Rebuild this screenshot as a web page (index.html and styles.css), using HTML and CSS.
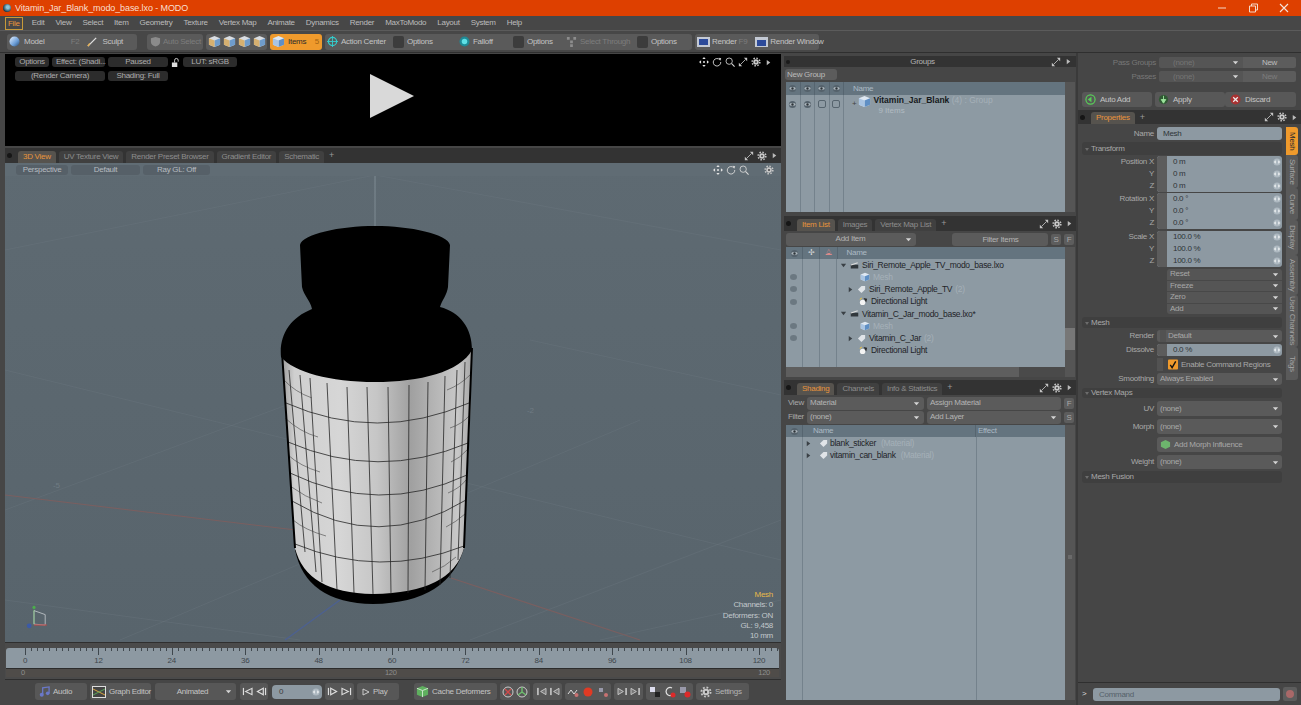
FILE: index.html
```html
<!DOCTYPE html>
<html lang="en">
<head>
<meta charset="utf-8">
<title>Vitamin_Jar_Blank_modo_base.lxo - MODO</title>
<link rel="stylesheet" href="styles.css">
</head>
<body>
<svg class="defs" width="0" height="0" aria-hidden="true">
  <defs>
    <linearGradient id="sphere" x1="0" y1="0" x2="1" y2="1"><stop offset="0" stop-color="#e8f2ff"/><stop offset=".6" stop-color="#6d9fd8"/><stop offset="1" stop-color="#24476f"/></linearGradient>
    <linearGradient id="bodygrad" x1="283" y1="0" x2="471" y2="0" gradientUnits="userSpaceOnUse">
      <stop offset="0" stop-color="#a0a0a0"/><stop offset=".06" stop-color="#cfcfcf"/><stop offset=".3" stop-color="#d6d6d6"/><stop offset=".5" stop-color="#c6c6c6"/><stop offset=".68" stop-color="#a0a0a0"/><stop offset=".8" stop-color="#b4b4b4"/><stop offset=".93" stop-color="#c8c8c8"/><stop offset="1" stop-color="#a8a8a8"/>
    </linearGradient>
    <symbol id="cube" viewBox="0 0 14 14"><path d="M7 1l6 2.500v7L7 13l-6-2.500v-7z" fill="#d9dde2"/><path d="M7 6l6-2.500v7L7 13z" fill="#6f9ccb"/><path d="M1 3.500L7 6v7l-6-2.500z" fill="#d6b070"/></symbol>
    <symbol id="cubeb" viewBox="0 0 14 14"><path d="M7 1l6 2.500v7L7 13l-6-2.500v-7z" fill="#dfe8f2"/><path d="M7 6l6-2.500v7L7 13z" fill="#5f8fc4"/><path d="M1 3.500L7 6v7l-6-2.500z" fill="#a9c4e2"/></symbol>
    <symbol id="eye" viewBox="0 0 10 10"><circle cx="5" cy="5" r="4" fill="#55626c"/><ellipse cx="5" cy="5" rx="3.500" ry="1.600" fill="#aab4bb"/><circle cx="5" cy="5" r="1.300" fill="#2c3338"/></symbol>
    <symbol id="move" viewBox="0 0 12 12"><path d="M6 0l2 2.500H4zM6 12l2-2.500H4zM0 6l2.500-2v4zM12 6L9.500 4v4z" fill="#e4e4e4"/><circle cx="6" cy="6" r="1.200" fill="#e4e4e4"/></symbol>
    <symbol id="rot" viewBox="0 0 12 12"><path d="M9.500 3.500A4.500 4.500 0 1 0 10.500 6" fill="none" stroke="#d8d8d8" stroke-width="1.100"/><path d="M8 1l3 .5-1 3z" fill="#d8d8d8"/></symbol>
    <symbol id="zoom" viewBox="0 0 12 12"><circle cx="5" cy="5" r="3.800" fill="none" stroke="#d8d8d8" stroke-width="1"/><path d="M8 8l3.500 3.500" stroke="#d8d8d8" stroke-width="1.300"/></symbol>
    <symbol id="expand" viewBox="0 0 12 12"><path d="M7 1h4v4zM1 11V7l4 4z" fill="#c4c4c4"/><path d="M3 9l6-6" stroke="#c4c4c4"/></symbol>
    <symbol id="gear" viewBox="0 0 12 12"><circle cx="6" cy="6" r="3.300" fill="#c8c8c8"/><circle cx="6" cy="6" r="4.600" fill="none" stroke="#c8c8c8" stroke-width="1.800" stroke-dasharray="1.800 1.800"/><circle cx="6" cy="6" r="1.200" fill="#444"/></symbol>
    <symbol id="caret" viewBox="0 0 8 8"><path d="M1 2.500h6L4 6z" fill="#d4d4d4"/></symbol>
    <symbol id="arrow" viewBox="0 0 8 8"><path d="M2 1v6l4-3z" fill="currentColor"/></symbol>
    <symbol id="light" viewBox="0 0 10 10"><circle cx="4" cy="6" r="3" fill="#f3f3f3"/><path d="M5 1l4 1-1 4z" fill="#2a2a2a"/><path d="M1 3l2-2" stroke="#e4c04a" stroke-width="1.200"/></symbol>
    <symbol id="scene" viewBox="0 0 12 10"><path d="M1 4h10v5H1z" fill="#30373c"/><path d="M1 3.500l9-3 .6 1.500-9 3z" fill="#dcdcdc"/></symbol>
    <symbol id="tag" viewBox="0 0 10 10"><path d="M1 5l4-4h4v4l-4 4z" fill="#e0e4e8"/></symbol>
    <symbol id="lr" viewBox="0 0 8 8"><circle cx="4" cy="4" r="3.600" fill="#aeb9c1"/><path d="M.8 4l2-1.800v3.600zM7.200 4l-2-1.800v3.600z" fill="#eef1f3"/></symbol>
    <symbol id="skl" viewBox="0 0 12 10"><path d="M1.500 1v8" stroke="#ddd" stroke-width="1.300"/><path d="M11 1.500v7L4 5z" fill="none" stroke="#ddd" stroke-width="1.300"/></symbol>
    <symbol id="stl" viewBox="0 0 12 10"><path d="M10.500 1v8" stroke="#ddd" stroke-width="1.300"/><path d="M8 1.500v7L1.500 5z" fill="none" stroke="#ddd" stroke-width="1.300"/></symbol>
    <symbol id="str" viewBox="0 0 12 10"><path d="M1.500 1v8" stroke="#ddd" stroke-width="1.300"/><path d="M4 1.500v7L10.500 5z" fill="none" stroke="#ddd" stroke-width="1.300"/></symbol>
    <symbol id="skr" viewBox="0 0 12 10"><path d="M10.500 1v8" stroke="#ddd" stroke-width="1.300"/><path d="M1 1.500v7L8 5z" fill="none" stroke="#ddd" stroke-width="1.300"/></symbol>
    <symbol id="kl" viewBox="0 0 12 10"><path d="M1 1h2v8H1z" fill="#bbb"/><path d="M11 1.500v7L5 5z" fill="#777" stroke="#ccc"/></symbol>
    <symbol id="kr" viewBox="0 0 12 10"><path d="M9 1h2v8H9z" fill="#bbb"/><path d="M1 1.500v7L7 5z" fill="#777" stroke="#ccc"/></symbol>
  </defs>
</svg>
<div class="app">
  <header class="titlebar">
    <span class="applogo"></span>
    <span class="titletext">Vitamin_Jar_Blank_modo_base.lxo - MODO</span>
    <span class="winctl">
      <svg class="wi" viewBox="0 0 10 10"><path d="M1 5h8" stroke="#f4d8c8"/></svg>
      <svg class="wi" viewBox="0 0 10 10"><path d="M1.500 3h6v6h-6zM3.500 3V1h6v6H7.500" fill="none" stroke="#f4d8c8"/></svg>
      <svg class="wi" viewBox="0 0 10 10"><path d="M1 1l8 8M9 1l-8 8" stroke="#f4e4dc" stroke-width="1.100"/></svg>
    </span>
  </header>
  <nav class="menubar">
    <span class="mi mi-on">File</span><span class="mi">Edit</span><span class="mi">View</span><span class="mi">Select</span><span class="mi">Item</span><span class="mi">Geometry</span><span class="mi">Texture</span><span class="mi">Vertex Map</span><span class="mi">Animate</span><span class="mi">Dynamics</span><span class="mi">Render</span><span class="mi">MaxToModo</span><span class="mi">Layout</span><span class="mi">System</span><span class="mi">Help</span>
  </nav>
  <div class="toolbar">
    <div class="tgroup w130">
      <svg class="ti" viewBox="0 0 12 12"><circle cx="6" cy="6" r="5.500" fill="url(#sphere)"/></svg>
      <span class="tl model">Model</span><span class="tk">F2</span>
      <svg class="ti" viewBox="0 0 12 12"><path d="M1 11L10 2" stroke="#e0e0e0" stroke-width="1.400"/><path d="M1 11l2-3" stroke="#e8b050" stroke-width="1.500"/></svg>
      <span class="tl sculpt">Sculpt</span>
    </div>
    <div class="tgroup w56 gap10">
      <svg class="ti" viewBox="0 0 12 12"><path d="M6 1l5 1.500v4Q11 10 6 11.500 1 10 1 6.500v-4z" fill="#8b8b8b"/></svg>
      <span class="tl off">Auto Select</span>
    </div>
    <div class="tgroup w61 gapc">
      <svg class="ci" viewBox="0 0 14 14"><use href="#cube"/></svg><svg class="ci" viewBox="0 0 14 14"><use href="#cube"/></svg><svg class="ci" viewBox="0 0 14 14"><use href="#cube"/></svg><svg class="ci" viewBox="0 0 14 14"><use href="#cube"/></svg>
    </div>
    <div class="tgroup w52 orange gap4">
      <svg class="ci" viewBox="0 0 14 14"><use href="#cubeb"/></svg>
      <span class="tl dark">Items</span><span class="tk5">5</span>
    </div>
    <div class="tgroup w367 gap4">
      <svg class="ti" viewBox="0 0 12 12"><circle cx="6" cy="6" r="4.500" fill="none" stroke="#3cc" stroke-width="1.300"/><path d="M6 0v12M0 6h12" stroke="#3cc"/></svg>
      <span class="tl f49">Action Center</span>
      <span class="sq"></span><span class="tl f49">Options</span>
      <svg class="ti" viewBox="0 0 12 12"><circle cx="6" cy="6" r="5.500" fill="#1f8a96"/><circle cx="6" cy="6" r="3" fill="#5fe0e6"/></svg>
      <span class="tl f37">Falloff</span>
      <span class="sq"></span><span class="tl f36">Options</span>
      <svg class="ti" viewBox="0 0 12 12"><path d="M1 1h3v3H1zM8 1h3v3H8zM4.500 5h3v3h-3zM4.500 9h3v3h-3z" fill="#8d8d8d"/></svg>
      <span class="tl off f54">Select Through</span>
      <span class="sq"></span><span class="tl">Options</span>
    </div>
    <div class="tgroup w124 gapr">
      <svg class="ri" viewBox="0 0 13 10"><rect width="13" height="10" fill="#c3c9d4"/><rect x="2" y="2" width="9" height="6" fill="#2c4a9a"/></svg>
      <span class="tl">Render</span><span class="tk">F9</span>
      <svg class="ri" viewBox="0 0 13 10"><rect width="13" height="10" fill="#c3c9d4"/><rect x="2" y="3" width="9" height="6" fill="#2c4a9a"/></svg>
      <span class="tl">Render Window</span>
    </div>
  </div>

  <div class="main">
    <section class="left">
      <div class="preview">
        <div class="ovrow">
          <span class="pb w34">Options</span><span class="pb w53">Effect: (Shadi...</span><span class="pb w60">Paused</span>
          <svg class="lock" viewBox="0 0 10 10"><path d="M1 5h6v5H1z" fill="#ddd"/><path d="M4 5V2.500a2 2 0 0 1 4 0V4" fill="none" stroke="#ddd"/></svg>
          <span class="pb w54">LUT: sRGB</span>
          <span class="ovicons">
            <svg class="oi"><use href="#move"/></svg><svg class="oi"><use href="#rot"/></svg><svg class="oi"><use href="#zoom"/></svg><svg class="oi"><use href="#expand"/></svg><svg class="oi"><use href="#gear"/></svg><svg class="oa"><use href="#arrow"/></svg>
          </span>
        </div>
        <div class="ovrow r2">
          <span class="pb w90">(Render Camera)</span><span class="pb w60">Shading: Full</span>
        </div>
        <svg class="play" viewBox="0 0 44 44"><path d="M0 0l44 22L0 44z" fill="#d9d9d9"/></svg>
      </div>

      <div class="tabs vt">
        <span class="dot"></span>
        <span class="tab on">3D View</span><span class="tab">UV Texture View</span><span class="tab">Render Preset Browser</span><span class="tab">Gradient Editor</span><span class="tab">Schematic</span><span class="plus">+</span>
        <span class="tabicons"><svg class="oi"><use href="#expand"/></svg><svg class="oi"><use href="#gear"/></svg><svg class="oa"><use href="#arrow"/></svg></span>
      </div>

      <div class="viewport">
        <svg class="scene" viewBox="5 163 776 479" preserveAspectRatio="none">
          <g stroke="#6c7880" stroke-width="1" fill="none" opacity=".35">
            <path d="M5 510L300 400M120 640L640 420M470 640L781 520M5 250L375 175M375 175L781 250M5 370L781 560M5 600L300 640M530 340L781 395M600 640L781 600"/>
          </g>
          <path d="M375 163V232" stroke="#7f8b93"/>
          <path d="M5 495L296 530M451 578L640 640" stroke="#7a5f60" stroke-width="1.100" fill="none"/>
          <path d="M340 600L285 640" stroke="#4d6190" stroke-width="1.400"/>
          <path d="M295 550Q306 603 373 604Q450 603 465 545Z" fill="#000"/>
          <path d="M282 352Q374 410 472 348L470 420L464 548Q452 593 373 594Q306 593 295 548L288 440Z" fill="url(#bodygrad)"/>
          <g fill="none" stroke="#262626" stroke-width=".8">
            <path d="M286 403Q377 443 469 403"/>
            <path d="M288 442Q378 481 468 443"/>
            <path d="M290 473Q379 516 467 475"/>
            <path d="M292 501Q379 553 466 500"/>
            <path d="M295 544Q380 579 464 546"/>
            <path d="M289 370L305 552M300 375L316 572M310 378L322 582M327 383L337 590M347 387L354 593M367 387L373 594M388 387L391 594M409 385L408 593M428 382L425 590M445 376L440 585M457 370L450 578M465 362L458 560"/>
          </g>
          <g fill="none" stroke="#444" stroke-width=".6">
            <path d="M284 380Q295 392 312 398M285 418Q300 432 318 437M288 455Q300 466 320 472M290 486Q305 497 322 503M293 520Q305 530 326 536M447 390Q460 385 470 375M450 428Q462 424 469 416M451 462Q460 458 467 450M448 493Q460 488 466 480M446 527Q456 522 465 514M432 572Q445 567 456 557"/>
          </g>
          <path d="M282 352L295 548M472 348L464 548" stroke="#000" stroke-width="2" fill="none"/>
          <path d="M300 245C302 234 340 226 375 226C410 226 448 234 450 245L448 287C447 295 442 300 440 307C460 312 472 328 472 350C460 372 420 382 375 382C330 382 294 372 281 357C279 335 290 318 312 309C310 300 304 296 302 287Z" fill="#000"/>
        </svg>
        <div class="vbar">
          <span class="vb w52v">Perspective</span><span class="vb w69v">Default</span><span class="vb w68v">Ray GL: Off</span>
          <span class="ovicons v"><svg class="oi"><use href="#move"/></svg><svg class="oi"><use href="#rot"/></svg><svg class="oi"><use href="#zoom"/></svg><svg class="oi gearv"><use href="#gear"/></svg></span>
        </div>
        <span class="coord c1">-2</span>
        <span class="coord c2">-5</span>
        <svg class="axis" viewBox="0 0 30 34">
          <path d="M10 8v18" stroke="#5aa55a" stroke-width="1.500"/><circle cx="10" cy="5" r="2" fill="#4cae4c"/>
          <path d="M10 9l14 5v13L10 26z" fill="none" stroke="#c6cbcf"/>
          <path d="M10 27h16" stroke="#b54a4a" stroke-width="1.500"/>
          <circle cx="4" cy="28" r="3" fill="#3b5aa8"/>
        </svg>
        <div class="stats">
          <span class="sm">Mesh</span><span>Channels: 0</span><span>Deformers: ON</span><span>GL: 9,458</span><span>10 mm</span>
        </div>
      </div>

      <div class="timeline">
        <div class="ruler">
          <span class="tn">0</span><span class="tn">12</span><span class="tn">24</span><span class="tn">36</span><span class="tn">48</span><span class="tn">60</span><span class="tn">72</span><span class="tn">84</span><span class="tn">96</span><span class="tn">108</span><span class="tn">120</span>
        </div>
        <div class="range"><span>0</span><span class="mid">120</span><span>120</span></div>
      </div>

      <div class="transport">
        <span class="tb w52"><svg class="ti" viewBox="0 0 12 12"><path d="M4 9V2l7-1v7" fill="none" stroke="#6a78c8" stroke-width="1.400"/><circle cx="3" cy="9.500" r="2.200" fill="#6a78c8"/><circle cx="9.500" cy="8" r="2" fill="#6a78c8"/></svg>Audio</span>
        <span class="tb w61"><svg class="ge" viewBox="0 0 14 12"><rect x=".5" y=".5" width="13" height="11" fill="#444" stroke="#ddd"/><path d="M1 3l12 6" stroke="#d9a640"/><path d="M1 9l12-6" stroke="#5aa55a"/></svg>Graph Editor</span>
        <span class="tb w81 ctr">Animated<svg class="cr"><use href="#caret"/></svg></span>
        <span class="tb w28 ctr"><svg class="sk"><use href="#skl"/></svg><svg class="sk"><use href="#stl"/></svg></span>
        <span class="frame">0<svg class="lr"><use href="#lr"/></svg></span>
        <span class="tb w29 ctr"><svg class="sk"><use href="#str"/></svg><svg class="sk"><use href="#skr"/></svg></span>
        <span class="tb w42"><svg class="pl" viewBox="0 0 8 8"><path d="M1 1v6l6-3z" fill="none" stroke="#ccc"/></svg>Play</span>
        <span class="tb w83 ml14"><svg class="ci" viewBox="0 0 14 14"><path d="M7 1l6 2.500v7L7 13l-6-2.500v-7z" fill="#5fb05f"/><path d="M7 6l6-2.500M7 6L1 3.500M7 6v7" stroke="#cfe8cf"/></svg>Cache Deformers</span>
        <span class="tb w30t ctr g2"><svg class="tr"><circle cx="6" cy="6" r="5" fill="none" stroke="#ccc"/><path d="M3 3l6 6M9 3l-6 6" stroke="#d04a4a" stroke-width="1.400"/></svg><svg class="tr"><circle cx="6" cy="6" r="5" fill="none" stroke="#ccc"/><path d="M6 6V1M6 6l4 3M6 6l-4 3" stroke="#6fc06f" stroke-width="1.400"/></svg></span>
        <span class="tb w29 ctr g2"><svg class="sk"><use href="#kl"/></svg><svg class="sk"><use href="#kl"/></svg></span>
        <span class="tb w46 ctr g4"><svg class="tr"><path d="M1 8l3-4 3 4 3-4" fill="none" stroke="#ddd"/><circle cx="9.500" cy="9" r="2" fill="#c87272"/></svg><svg class="tr"><circle cx="6" cy="6" r="4.500" fill="#e03a24"/></svg><svg class="tr"><path d="M2 2h4v4H2z" fill="#99a"/><circle cx="9" cy="9" r="2" fill="#c87272"/></svg></span>
        <span class="tb w29 ctr g2"><svg class="sk"><use href="#kr"/></svg><svg class="sk"><use href="#kr"/></svg></span>
        <span class="tb w47 ctr g3"><svg class="tr"><path d="M1 1h5v5H1z" fill="#dde"/><path d="M6 6h5v5H6z" fill="#222"/></svg><svg class="tr"><path d="M8 2a4 4 0 1 0 0 7" fill="none" stroke="#ddd" stroke-width="1.300"/><circle cx="9" cy="9" r="2.500" fill="#dd2a2a"/></svg><svg class="tr"><path d="M1 1h6v6H1z" fill="#99a"/><circle cx="8.500" cy="8.500" r="3" fill="#dd2a2a"/></svg></span>
        <span class="tb w53 last"><svg class="tr"><use href="#gear"/></svg>Settings</span>
      </div>
    </section>

    <section class="center">
      <div class="ghead"><span class="dotg"></span><span class="gtitle">Groups</span><svg class="oi"><use href="#expand"/></svg><svg class="oa"><use href="#arrow"/></svg></div>
      <div class="gbtnrow"><span class="gbtn">New Group</span></div>
      <div class="listwrap lw-g">
        <div class="list">
          <div class="lhead cols-g">
            <span class="c"><svg class="ei"><use href="#eye"/></svg></span><span class="c"><svg class="ei"><use href="#eye"/></svg></span><span class="c"><svg class="ei"><use href="#eye"/></svg></span><span class="c"><svg class="ei"><use href="#eye"/></svg></span><span class="nm">Name</span>
          </div>
          <div class="lbody cols-gb">
            <span class="c"><svg class="ei"><use href="#eye"/></svg></span><span class="c"><svg class="ei"><use href="#eye"/></svg></span><span class="c"><i class="box"></i></span><span class="c"><i class="box"></i></span>
            <div class="gitem">
              <span class="pm">+</span>
              <svg class="ci" viewBox="0 0 14 14"><use href="#cubeb"/></svg>
              <div class="gtxt"><span><b>Vitamin_Jar_Blank</b> <em>(4) : Group</em></span><span class="sub">9 Items</span></div>
            </div>
          </div>
        </div>
        <div class="sb"></div>
      </div>

      <div class="tabs pt">
        <span class="dot"></span><span class="tab on">Item List</span><span class="tab">Images</span><span class="tab">Vertex Map List</span><span class="plus">+</span>
        <span class="tabicons"><svg class="oi"><use href="#expand"/></svg><svg class="oi"><use href="#gear"/></svg><svg class="oa"><use href="#arrow"/></svg></span>
      </div>
      <div class="ctlrow">
        <span class="dd w130c">Add Item<svg class="cr"><use href="#caret"/></svg></span>
        <span class="fi">Filter Items</span><span class="sq2">S</span><span class="sq2">F</span>
      </div>
      <div class="listwrap lw-i">
        <div class="list">
          <div class="lhead cols-i">
            <span class="c"><svg class="ei"><use href="#eye"/></svg></span><span class="c">✢</span><span class="c rd">⟁</span><span class="nm">Name</span>
          </div>
          <div class="ibody">
            <div class="irow l0"><svg class="ar"><use href="#arrow"/></svg><svg class="ic"><use href="#scene"/></svg>Siri_Remote_Apple_TV_modo_base.lxo</div>
            <div class="irow l1 vis"><svg class="ic big"><use href="#cubeb"/></svg><span class="dim">Mesh</span></div>
            <div class="irow l2 vis"><svg class="ar"><use href="#arrow"/></svg><svg class="ic"><use href="#tag"/></svg>Siri_Remote_Apple_TV <em>(2)</em></div>
            <div class="irow l3 vis"><svg class="ic"><use href="#light"/></svg>Directional Light</div>
            <div class="irow l0"><svg class="ar"><use href="#arrow"/></svg><svg class="ic"><use href="#scene"/></svg>Vitamin_C_Jar_modo_base.lxo*</div>
            <div class="irow l1 vis"><svg class="ic big"><use href="#cubeb"/></svg><span class="dim">Mesh</span></div>
            <div class="irow l2 vis"><svg class="ar"><use href="#arrow"/></svg><svg class="ic"><use href="#tag"/></svg>Vitamin_C_Jar <em>(2)</em></div>
            <div class="irow l3"><svg class="ic"><use href="#light"/></svg>Directional Light</div>
          </div>
          <div class="hscroll"><span class="hthumb"></span></div>
        </div>
        <div class="sb"><span class="thumb"></span></div>
      </div>

      <div class="tabs pt st">
        <span class="dot"></span><span class="tab on">Shading</span><span class="tab">Channels</span><span class="tab">Info &amp; Statistics</span><span class="plus">+</span>
        <span class="tabicons"><svg class="oi"><use href="#expand"/></svg><svg class="oi"><use href="#gear"/></svg><svg class="oa"><use href="#arrow"/></svg></span>
      </div>
      <div class="srow first"><span class="sl">View</span><span class="dd w117">Material<svg class="cr"><use href="#caret"/></svg></span><span class="dd w134">Assign Material</span><span class="sq2">F</span></div>
      <div class="srow"><span class="sl">Filter</span><span class="dd w117">(none)<svg class="cr"><use href="#caret"/></svg></span><span class="dd w134">Add Layer<svg class="cr"><use href="#caret"/></svg></span><span class="sq2">S</span></div>
      <div class="listwrap lw-s">
        <div class="list">
          <div class="lhead cols-s">
            <span class="c"><svg class="ei"><use href="#eye"/></svg></span><span class="nm2">Name</span><span class="nm3">Effect</span>
          </div>
          <div class="sbody">
            <div class="srow2"><svg class="ar"><use href="#arrow"/></svg><svg class="ic"><use href="#tag"/></svg>blank_sticker <em>(Material)</em></div>
            <div class="srow2"><svg class="ar"><use href="#arrow"/></svg><svg class="ic"><use href="#tag"/></svg>vitamin_can_blank <em>(Material)</em></div>
          </div>
        </div>
        <div class="sb"><span class="grip"></span></div>
      </div>
    </section>

    <section class="right">
      <div class="passrow"><span class="plab">Pass Groups</span><span class="pdd">(none)<svg class="cr"><use href="#caret"/></svg></span><span class="pnew">New</span></div>
      <div class="passrow"><span class="plab">Passes</span><span class="pdd">(none)<svg class="cr"><use href="#caret"/></svg></span><span class="pnew dimn">New</span></div>
      <div class="actrow">
        <span class="act a1"><svg class="ti" viewBox="0 0 12 12"><circle cx="6" cy="6" r="5" fill="none" stroke="#58d058" stroke-width="1.300"/><path d="M3 6l4-3v6z" fill="#58d058"/></svg>Auto Add</span>
        <span class="act a2"><svg class="ti" viewBox="0 0 12 12"><circle cx="6" cy="6" r="5" fill="#2f5a33"/><path d="M6 2v5M3.500 6L6 10l2.500-4z" stroke="#9be39b" fill="#9be39b"/></svg>Apply</span>
        <span class="act a3"><svg class="ti" viewBox="0 0 12 12"><circle cx="6" cy="6" r="5.500" fill="#a83232"/><path d="M3.500 3.500l5 5M8.500 3.500l-5 5" stroke="#eee" stroke-width="1.300"/></svg>Discard</span>
      </div>
      <div class="tabs pr">
        <span class="dot"></span><span class="tab on">Properties</span><span class="plus">+</span>
        <span class="tabicons"><svg class="oi"><use href="#expand"/></svg><svg class="oi"><use href="#gear"/></svg><svg class="oa"><use href="#arrow"/></svg></span>
      </div>
      <div class="propwrap">
        <div class="form">
          <div class="fr h13 mb2"><label>Name</label><span class="namef">Mesh</span></div>
          <div class="sect h13">Transform</div>
          <div class="vec">
            <div class="labs"><label>Position X</label><label>Y</label><label>Z</label></div>
            <div class="vbox"><div class="vr"><i class="hnd"></i><span>0 m</span><svg class="lr"><use href="#lr"/></svg></div><div class="vr"><i class="hnd"></i><span>0 m</span><svg class="lr"><use href="#lr"/></svg></div><div class="vr"><i class="hnd"></i><span>0 m</span><svg class="lr"><use href="#lr"/></svg></div></div>
          </div>
          <div class="vec">
            <div class="labs"><label>Rotation X</label><label>Y</label><label>Z</label></div>
            <div class="vbox"><div class="vr"><i class="hnd"></i><span>0.0 °</span><svg class="lr"><use href="#lr"/></svg></div><div class="vr"><i class="hnd"></i><span>0.0 °</span><svg class="lr"><use href="#lr"/></svg></div><div class="vr"><i class="hnd"></i><span>0.0 °</span><svg class="lr"><use href="#lr"/></svg></div></div>
          </div>
          <div class="vec gap2">
            <div class="labs"><label>Scale X</label><label>Y</label><label>Z</label></div>
            <div class="vbox"><div class="vr"><i class="hnd"></i><span>100.0 %</span><svg class="lr"><use href="#lr"/></svg></div><div class="vr"><i class="hnd"></i><span>100.0 %</span><svg class="lr"><use href="#lr"/></svg></div><div class="vr"><i class="hnd"></i><span>100.0 %</span><svg class="lr"><use href="#lr"/></svg></div></div>
          </div>
          <div class="opgroup">
            <div class="op">Reset<svg class="cr"><use href="#caret"/></svg></div><div class="op">Freeze<svg class="cr"><use href="#caret"/></svg></div><div class="op">Zero<svg class="cr"><use href="#caret"/></svg></div><div class="op">Add<svg class="cr"><use href="#caret"/></svg></div>
          </div>
          <div class="sect h11 mt3">Mesh</div>
          <div class="fr h12 mt2"><label>Render</label><span class="ddp"><i class="hnd d"></i>Default<svg class="cr"><use href="#caret"/></svg></span></div>
          <div class="fr h12 mt2"><label>Dissolve</label><span class="valf"><i class="hnd"></i><span>0.0 %</span><svg class="lr"><use href="#lr"/></svg></span></div>
          <div class="fr h13 mt2"><label></label><span class="chk"><i class="hnd d"></i><svg class="cb" viewBox="0 0 11 11"><rect width="11" height="11" rx="1" fill="#ef9a2c"/><path d="M2.500 6l2 3 4-7" fill="none" stroke="#111" stroke-width="1.500"/></svg>Enable Command Regions</span></div>
          <div class="fr h12 mt2"><label>Smoothing</label><span class="ddp">Always Enabled<svg class="cr"><use href="#caret"/></svg></span></div>
          <div class="sect h10 mt3">Vertex Maps</div>
          <div class="fr h15 mt3"><label>UV</label><span class="ddp">(none)<svg class="cr"><use href="#caret"/></svg></span></div>
          <div class="fr h15 mt3"><label>Morph</label><span class="ddp">(none)<svg class="cr"><use href="#caret"/></svg></span></div>
          <div class="fr h15 mt3"><label></label><span class="ddp"><svg class="ti mor" viewBox="0 0 12 12"><path d="M6 1l5 2.500v5L6 11 1 8.500v-5z" fill="#6db56d"/></svg>Add Morph Influence</span></div>
          <div class="fr h14 mt3"><label>Weight</label><span class="ddp">(none)<svg class="cr"><use href="#caret"/></svg></span></div>
          <div class="sect h12 mt2">Mesh Fusion</div>
        </div>
        <div class="vtabs">
          <span class="vtab on v27">Mesh</span><span class="vtab v33">Surface</span><span class="vtab v32">Curve</span><span class="vtab v35">Display</span><span class="vtab v40">Assembly</span><span class="vtab v52">User Channels</span><span class="vtab v33">Tags</span>
        </div>
      </div>
      <div class="cmdrow"><span class="gt">&gt;</span><span class="cmd">Command</span><span class="rec"><i></i></span></div>
    </section>
  </div>
</div>
</body>
</html>
```
FILE: styles.css
```css
* { box-sizing: border-box; }
html, body { margin: 0; padding: 0; height: 100%; overflow: hidden; background: #464646; }
body, .app { font: 8px/1 "Liberation Sans", Arial, sans-serif; color: #c4c4c4; letter-spacing: -.28px; }
.defs { position: absolute; }
.app { width: 1301px; height: 705px; display: flex; flex-direction: column; overflow: hidden; }
svg { flex: none; overflow: visible; }

.titlebar { height: 16px; background: #de4000; display: flex; align-items: center; padding-left: 3px; flex: none; }
.applogo { width: 8px; height: 8px; border-radius: 50%; background: radial-gradient(circle at 60% 40%, #8fc4d8 20%, #1d3b4d 70%); margin-right: 4px; }
.titletext { color: #f9dfcf; font-size: 9px; letter-spacing: -.1px; }
.winctl { margin-left: auto; display: flex; gap: 21px; padding-right: 12px; }
.wi { width: 10px; height: 10px; }

.menubar { height: 15px; background: #474747; border-bottom: 1px solid #5b5b5b; display: flex; align-items: center; padding-left: 5px; gap: 11px; flex: none; color: #bcbcbc; }
.mi-on { border: 1px solid #c69a3a; color: #e8943c; padding: 2px 2px; margin-right: -2px; height: 13px; }

.toolbar { height: 22px; background: #474747; border-bottom: 1px solid #2f2f2f; display: flex; align-items: center; padding-left: 7px; gap: 3px; flex: none; }
.tgroup { height: 16px; background: #5a5a5a; border-radius: 3px; display: flex; align-items: center; padding: 0 2px; gap: 2px; flex: none; }
.w130 { width: 130px; margin-right: 7px; }
.w56 { width: 56px; }
.w61 { width: 61px; }
.w52 { width: 52px; }
.w367 { width: 367px; }
.w124 { width: 124px; }
.gapc { gap: 2px; justify-content: center; }
.gapr { gap: 2px; }
.gap4 { gap: 3px; }
.gap10 { padding-left: 3px; }
.orange { background: #ef9a2c; }
.ti { width: 11px; height: 11px; }
.ci { width: 13px; height: 13px; }
.ri { width: 13px; height: 10px; }
.tl { white-space: nowrap; }
.tl.off { color: #7d7d7d; }
.tl.dark { color: #2c2c2c; }
.model { margin-left: 2px; }
.sculpt { margin-left: 2px; margin-right: 12px; }
.tk { color: #7d7d7d; margin-left: auto; margin-right: 6px; }
.tk5 { color: #a46410; margin-left: auto; margin-right: 1px; }
.f49 { width: 49px; }
.f37 { width: 37px; }
.f36 { width: 36px; }
.f54 { width: 54px; }
.sq { width: 11px; height: 12px; background: #3c3c3c; border-radius: 2px; flex: none; }

.main { flex: 1; display: flex; min-height: 0; }
.left { width: 783px; flex: none; padding-left: 5px; display: flex; flex-direction: column; }
.center { width: 293px; flex: none; padding: 3px 0 0 2px; display: flex; flex-direction: column; }
.right { flex: 1; border-left: 2px solid #3a3a3a; display: flex; flex-direction: column; padding-top: 4px; min-width: 0; }

.preview { height: 92px; background: #000; margin-top: 1px; margin-right: 2px; padding: 3px 0 0 10px; position: relative; flex: none; }
.ovrow { display: flex; align-items: center; gap: 3px; height: 10px; }
.r2 { margin-top: 4px; }
.pb { height: 10px; background: #2c2c2c; border-radius: 3px; color: #adadad; text-align: center; line-height: 10px; white-space: nowrap; }
.w34 { width: 34px; }
.w53 { width: 53px; }
.w60 { width: 60px; }
.w54 { width: 54px; }
.w90 { width: 90px; }
.lock { width: 9px; height: 9px; margin: 0; }
.ovicons { margin-left: auto; display: flex; gap: 3px; align-items: center; padding-right: 9px; }
.oi { width: 10px; height: 10px; }
.oa { width: 7px; height: 7px; color: #bbb; margin-left: 1px; }
.play { position: absolute; left: 365px; top: 20px; width: 44px; height: 44px; }

.tabs { display: flex; align-items: flex-end; background: #333; flex: none; gap: 3px; }
.vt { height: 15px; margin-right: 2px; margin-top: 2px; }
.dot { width: 5px; height: 5px; background: #161616; border-radius: 50%; align-self: center; margin: 0 3px 0 2px; flex: none; }
.tab { height: 12px; background: #404040; color: #8d8d8d; padding: 2px 5px 0; border-radius: 3px 3px 0 0; white-space: nowrap; }
.tab.on { background: #56534e; color: #e8943c; }
.plus { color: #9a9a9a; align-self: center; margin-left: 2px; font-size: 9px; }
.tabicons { margin-left: auto; display: flex; align-items: center; gap: 3px; align-self: center; padding-right: 3px; }

.viewport { height: 479px; margin-right: 2px; position: relative; background: linear-gradient(#5e6a72, #58646c); overflow: hidden; flex: none; }
.scene { position: absolute; inset: 0; width: 100%; height: 100%; }
.vbar { position: relative; display: flex; gap: 3px; padding: 2px 0 0 11px; height: 13px; align-items: flex-start; background: #606c74; }
.vb { height: 10px; background: #566068; border-radius: 3px; color: #b6bcc0; text-align: center; line-height: 10px; white-space: nowrap; }
.w52v { width: 52px; }
.w69v { width: 69px; }
.w68v { width: 67px; }
.ovicons.v { gap: 3px; padding-right: 7px; }
.gearv { margin-left: 12px; }
.coord { position: absolute; color: #6f7b83; }
.c1 { left: 522px; top: 244px; }
.c2 { left: 48px; top: 319px; }
.axis { position: absolute; left: 21px; top: 440px; width: 24px; height: 28px; }
.stats { position: absolute; right: 8px; bottom: 2px; display: flex; flex-direction: column; align-items: flex-end; gap: 2.250px; color: #c2c8cc; }
.sm { color: #e7b84a; }

.timeline { height: 38px; background: #4a4a4a; border-top: 1px solid #2f2f2f; border-bottom: 1px solid #2e2e2e; padding: 5px 2px 0 1px; margin-right: 2px; flex: none; }
.ruler { height: 20px; background-color: #8d99a2; border-radius: 3px 3px 0 0; background-image: repeating-linear-gradient(90deg, #3f474d 0 1px, transparent 1px 73.4px), repeating-linear-gradient(90deg, #3f474d 0 1px, transparent 1px 6.117px); background-size: 100% 7px, 100% 3px; background-repeat: no-repeat; background-position: 19px 0, 19px 0; display: flex; justify-content: space-between; padding: 9px 10px 0 9px; }
.tn { width: 20px; text-align: center; color: #3e464c; }
.range { height: 9px; background: #4f4c49; border-top: 1px solid #2c2c2c; display: flex; justify-content: space-between; padding: 0 9px 0 15px; color: #8e8e8e; font-size: 7.500px; line-height: 8px; }
.mid { margin-left: 360px; margin-right: auto; }

.transport { height: 23px; display: flex; align-items: center; padding-left: 30px; gap: 3px; flex: none; }
.tb { height: 17px; background: #575757; border-radius: 3px; display: flex; align-items: center; padding: 0 2px; gap: 3px; white-space: nowrap; flex: none; }
.w81 { width: 81px; position: relative; padding-right: 8px; margin-left: 1px; }
.w28 { width: 28px; margin-left: 1px; }
.w29 { width: 29px; }
.w42 { width: 42px; padding-left: 5px; }
.w83 { width: 83px; }
.tb.w52 { width: 52px; padding-left: 4px; }
.tb.w61 { width: 61px; }
.w30t { width: 30px; }
.w46 { width: 46px; }
.w47 { width: 47px; }
.w53 { width: 53px; padding-left: 4px; }
.ml14 { margin-left: 12px; }
.ctr { justify-content: center; }
.w81 .cr { position: absolute; right: 4px; top: 5px; }
.ge { width: 14px; height: 12px; }
.cr { width: 7px; height: 7px; margin-left: auto; }
.sk { width: 11px; height: 9px; }
.g2 { gap: 2px; }
.frame { width: 50px; height: 14px; background: #8d99a2; border-radius: 4px; color: #3c3c3c; display: flex; align-items: center; justify-content: space-between; padding: 0 2px 0 7px; flex: none; margin-left: 1px; }
.lr { width: 8px; height: 8px; }
.pl { width: 8px; height: 8px; }
.tr { width: 12px; height: 12px; }
.last { color: #b4b4b4; }

.ghead { height: 11px; background: #333; display: flex; align-items: center; gap: 3px; padding-right: 4px; margin-left: -1px; }
.dotg { width: 4px; height: 4px; background: #1a1a1a; border-radius: 50%; margin-left: 2px; }
.gtitle { flex: 1; text-align: center; color: #b4b4b4; padding-left: 4px; }
.gbtnrow { height: 15px; padding-top: 2px; }
.gbtn { display: block; width: 52px; height: 11px; background: #5c5c5c; border-radius: 3px; line-height: 11px; padding-left: 2px; color: #bbb; }
.listwrap { display: flex; flex: none; margin-right: 1px; padding-left: 1px; }
.list { flex: 1; display: flex; flex-direction: column; background: #8d9aa3; min-width: 0; }
.sb { width: 10px; background: #555; position: relative; flex: none; }
.lw-g { height: 130px; }
.lw-i { height: 130px; }
.lw-s { height: 275px; margin-top: 1px; }
.lhead { height: 13px; background: #64747f; display: flex; align-items: center; color: #acbac4; flex: none; }
.lhead.cols-i, .lhead.cols-s { height: 12px; }
.c { display: flex; align-items: center; justify-content: center; height: 100%; flex: none; border-right: 1px solid #566570; color: #ddd; }
.rd { color: #d98a8a; }
.ei { width: 9px; height: 9px; }
.cols-g .c, .cols-gb .c { width: 14.500px; }
.nm { padding-left: 9px; }
.lbody { flex: 1; display: flex; position: relative; background: #8d9aa3; }
.cols-gb .c { height: 100%; align-items: flex-start; padding-top: 5px; border-right: 1px solid #74828c; }
.box { width: 8px; height: 8px; border: 1px solid #56646e; border-radius: 2px; display: block; }
.gitem { display: flex; gap: 2px; padding: 0 0 0 8px; }
.pm { color: #444; padding-top: 5px; }
.gtxt { display: flex; flex-direction: column; gap: 2px; padding-top: 1px; color: #15191c; font-size: 8.500px; letter-spacing: 0; }
.gtxt b { font-weight: 700; }
em { font-style: normal; color: #a5b0b8; }
.sub { color: #b1bbc2; padding-left: 5px; font-size: 8px; }

.pt { height: 15px; margin: 4px 0 0 -1px; }
.st { margin-top: 3px; }
.ctlrow { display: flex; height: 16px; align-items: center; gap: 3px; padding: 0 2px 0 1px; }
.dd { height: 13px; background: #5b5b5b; border-radius: 3px; display: flex; align-items: center; padding: 0 4px 0 3px; color: #b4b4b4; flex: none; white-space: nowrap; }
.w130c { width: 130px; justify-content: center; position: relative; }
.w130c .cr { position: absolute; right: 4px; top: 3px; }
.fi { flex: 1; height: 13px; background: #5b5b5b; border-radius: 3px; line-height: 13px; margin-left: 33px; padding-left: 1px; text-align: center; color: #b4b4b4; }
.sq2 { width: 10px; height: 11px; background: #5d5d5d; border-radius: 2px; text-align: center; line-height: 11px; color: #a8a8a8; flex: none; }
.cols-i .c:nth-child(1), .cols-i .c:nth-child(2) { width: 17px; }
.cols-i .c:nth-child(3) { width: 17.500px; }
.cols-i .c { border-right: 1px solid #566570; }
.ibody { flex: 1; padding: 0; color: #1f2428; font-size: 8.500px; background: linear-gradient(90deg, transparent 16px, #74828c 16px 17px, transparent 17px 33px, #74828c 33px 34px, transparent 34px 50.500px, #74828c 50.500px 51.500px, transparent 51.500px); }
.irow { height: 12.200px; display: flex; align-items: center; position: relative; white-space: nowrap; gap: 3px; }
.vis::before { content: ""; position: absolute; left: 4px; top: 3px; width: 7px; height: 6px; border-radius: 50%; background: #6b7881; }
.l0 { padding-left: 54px; }
.l1 { padding-left: 74px; }
.l2 { padding-left: 61px; }
.l3 { padding-left: 73px; }
.ar { width: 7px; height: 7px; color: #3a4045; }
.l0 .ar { transform: rotate(90deg); }
.ic { width: 9px; height: 9px; }
.big { width: 10px; height: 10px; }
.dim { color: #a5b0b8; }
.hscroll { height: 10px; background: #4a4a4a; flex: none; }
.hthumb { display: block; width: 233px; height: 100%; background: #5e5e5e; }
.thumb { position: absolute; left: 0; top: 81px; width: 10px; height: 22px; background: #777; }
.srow { height: 14px; display: flex; align-items: center; gap: 3px; flex: none; padding-right: 3px; margin-left: -2px; }
.first { margin-top: 1px; }
.sl { width: 21px; text-align: right; color: #a8a8a8; flex: none; }
.w117 { width: 117px; }
.w134 { width: 134px; }
.cols-s .c { width: 17px; }
.nm2 { width: 173px; padding-left: 10px; border-right: 1px solid #566570; height: 100%; line-height: 12px; flex: none; }
.nm3 { padding-left: 2px; }
.sbody { flex: 1; padding-top: 0; color: #1f2428; font-size: 8.500px; background: linear-gradient(90deg, transparent 16px, #74828c 16px 17px, transparent 17px 190px, #74828c 190px 191px, transparent 191px); }
.srow2 { height: 12px; display: flex; align-items: center; padding-left: 19px; gap: 5px; white-space: nowrap; }
.srow2 .ic { margin-left: 2px; margin-right: -3px; }
.grip { position: absolute; left: 3px; top: 130px; width: 4px; height: 4px; background: #6a6a6a; }

.passrow { display: flex; height: 11px; margin-bottom: 3px; padding-right: 5px; align-items: stretch; }
.plab { width: 81px; text-align: right; color: #777; line-height: 11px; padding-right: 3px; flex: none; }
.pdd { width: 84px; background: #555; display: flex; align-items: center; padding: 0 4px 0 14px; color: #747474; border-radius: 2px 0 0 2px; flex: none; }
.pnew { flex: 1; background: #5c5c5c; text-align: center; color: #bcbcbc; line-height: 11px; border-radius: 0 2px 2px 0; }
.dimn { color: #7c7c7c; }
.actrow { display: flex; height: 15px; margin: 7px 5px 0 4px; gap: 3px; }
.act { background: #585858; border-radius: 3px; display: flex; align-items: center; gap: 4px; padding: 0 3px; height: 15px; }
.a1 { width: 70px; }
.a2 { width: 70px; }
.a3 { flex: 1; margin-left: -3px; padding-left: 5px; }
.pr { height: 14px; margin-top: 3px; }
.propwrap { display: flex; flex: 1; padding: 3px 0 0 4px; gap: 4px; min-height: 0; }
.form { width: 200px; flex: none; display: flex; flex-direction: column; }
.fr { display: flex; align-items: stretch; flex: none; }
.fr label, .labs label { width: 75px; text-align: right; color: #a8a8a8; padding-right: 3px; flex: none; display: block; }
.fr label { align-self: center; }
.h13 { height: 13px; }
.h12 { height: 12px; }
.h11 { height: 11px; }
.h10 { height: 10px; }
.h14 { height: 14px; }
.h15 { height: 15px; }
.mb2 { margin-bottom: 2px; }
.mt2 { margin-top: 2px; }
.mt3 { margin-top: 3px; }
.namef { flex: 1; background: #8d99a2; border-radius: 3px; padding-left: 6px; line-height: 13px; color: #2e3438; }
.sect { background: #3f3f3f; border-radius: 3px; padding-left: 9px; color: #a8a8a8; display: flex; align-items: center; flex: none; position: relative; }
.sect::before { content: ""; position: absolute; left: 3px; top: 50%; margin-top: -1px; border: 2px solid transparent; border-top: 3px solid #6c6c6c; }
.vec { display: flex; height: 36px; margin-top: 1px; flex: none; }
.gap2 { margin-top: 2px; }
.labs { width: 75px; flex: none; display: flex; flex-direction: column; justify-content: space-around; }
.vbox { flex: 1; background: #8d99a2; border-radius: 3px; display: flex; flex-direction: column; justify-content: space-around; overflow: hidden; }
.vr { display: flex; align-items: center; height: 12px; color: #2e3438; padding-right: 1px; }
.vr .hnd, .valf .hnd { width: 10px; height: 100%; background: #5c5c5c; margin-right: 6px; display: block; flex: none; }
.vr .lr, .valf .lr { margin-left: auto; }
.opgroup { margin: 2px 0 0 85px; background: #555; border-radius: 3px; display: flex; flex-direction: column; height: 45px; flex: none; }
.op { flex: 1; display: flex; align-items: center; padding: 0 3px 0 3px; color: #a8a8a8; border-bottom: 1px solid #484848; }
.op:last-child { border-bottom: 0; }
.ddp { flex: 1; background: #5a5a5a; border-radius: 3px; display: flex; align-items: center; padding: 0 3px 0 3px; color: #a8a8a8; white-space: nowrap; }
.hnd.d { width: 6px; height: 100%; background: #525252; margin-right: 2px; display: block; flex: none; }
.valf { flex: 1; background: #8d99a2; border-radius: 3px; display: flex; align-items: center; color: #2e3438; overflow: hidden; padding-right: 1px; }
.chk { flex: 1; display: flex; align-items: center; background: #464646; color: #a8a8a8; gap: 3px; }
.cb { width: 10px; height: 11px; }
.mor { margin-right: 3px; }
.vtabs { width: 12px; display: flex; flex-direction: column; flex: none; }
.vtab { writing-mode: vertical-rl; background: #5a5a5a; color: #a4a4a4; display: block; text-align: center; border-radius: 0 3px 3px 0; white-space: nowrap; line-height: 11px; flex: none; }
.vtab.on { background: #ef9a2c; color: #2c2c2c; }
.v27 { height: 28px; }
.v33 { height: 33px; }
.v32 { height: 32px; }
.v35 { height: 35px; }
.v40 { height: 40px; }
.v52 { height: 52px; }
.cmdrow { height: 23px; border-top: 1px solid #2f2f2f; display: flex; align-items: center; gap: 3px; padding: 0 4px 0 4px; flex: none; }
.gt { color: #ddd; width: 8px; }
.cmd { flex: 1; height: 13px; background: #8d99a2; border-radius: 3px; color: #55616a; line-height: 13px; padding-left: 6px; }
.rec { width: 14px; height: 14px; background: #5d5d5d; border-radius: 2px; display: flex; align-items: center; justify-content: center; }
.rec i { width: 8px; height: 8px; border-radius: 50%; background: #a96868; display: block; }
```
